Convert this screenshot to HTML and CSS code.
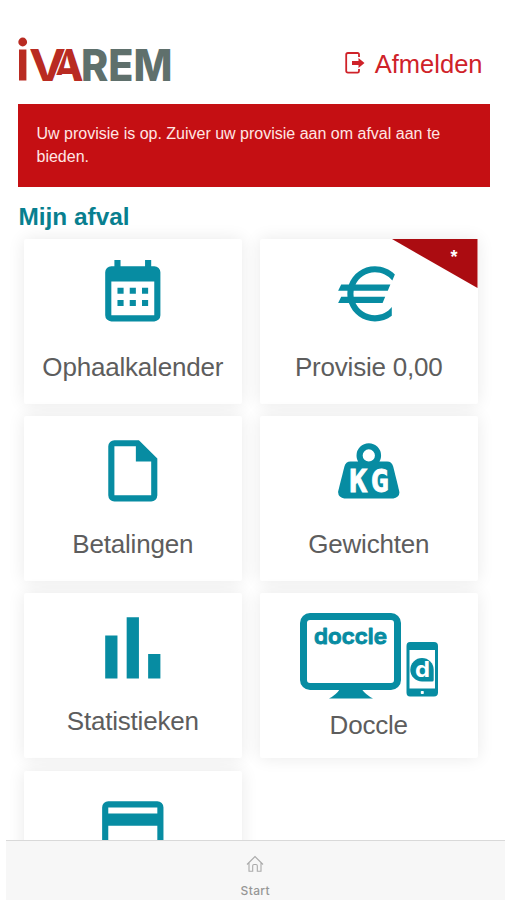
FILE: index.html
```html
<!DOCTYPE html>
<html lang="nl">
<head>
<meta charset="utf-8">
<title>Ivarem</title>
<link rel="stylesheet" href="styles.css">
</head>
<body>
<div class="app">
  <header class="header">
    <svg class="logo" viewBox="0 0 154 46" role="img" aria-label="Ivarem">
      <defs><clipPath id="a-clip"><path d="M46 8H70V46H53V38H38V33Z"/></clipPath></defs>
      <g class="logo-red">
        <circle cx="4.700" cy="5" r="4.400"/>
        <rect x="1" y="12.500" width="7.400" height="31"/>
        <g clip-path="url(#a-clip)"><text x="33" y="43.500" textLength="32.500" lengthAdjust="spacingAndGlyphs">A</text></g>
        <text class="logo-v" x="11" y="43.500" textLength="37" lengthAdjust="spacingAndGlyphs">V</text>
      </g>
      <text class="logo-grey" x="63" y="43.500" textLength="91.500" lengthAdjust="spacingAndGlyphs">REM</text>
    </svg>
    <a class="logout">
      <svg class="logout-icon" viewBox="0 0 20 22"><path class="logout-door" d="M14 5V2.500Q14 1 12.500 1H3Q1.200 1 1.200 2.800V18.800Q1.200 20.600 3 20.600H12.500Q14 20.600 14 19V17"/><path d="M7 9h6.500V6l6 5-6 5v-3H7z"/></svg>
      <span>Afmelden</span>
    </a>
  </header>
  <div class="alert">Uw provisie is op. Zuiver uw provisie aan om afval aan te bieden.</div>
  <h1 class="title">Mijn afval</h1>
  <main class="grid">
    <a class="card">
      <svg class="icon" viewBox="0 0 24 24"><path fill-rule="evenodd" d="M6 1H8V3H16V1H18V3H19A2 2 0 0 1 21 5V19A2 2 0 0 1 19 21H5A2 2 0 0 1 3 19V5A2 2 0 0 1 5 3H6ZM5 8V19H19V8Z"/><path d="M7 10h2v2H7zM11 10h2v2h-2zM15 10h2v2h-2zM7 14h2v2H7zM11 14h2v2h-2zM15 14h2v2h-2z"/></svg>
      <span class="label">Ophaalkalender</span>
    </a>
    <a class="card">
      <span class="ribbon"><b>*</b></span>
      <svg class="icon" viewBox="0 0 24 24"><path d="M7.070 11L7 12L7.070 13H17.350L16.500 15H7.670C8.800 17.360 11.210 19 14 19C16.230 19 18.220 17.960 19.500 16.330V19.120C18 20.300 16.070 21 14 21C10.080 21 6.750 18.500 5.500 15H2L3 13H5.050L5 12L5.050 11H2L3 9H5.500C6.750 5.500 10.080 3 14 3C16.500 3 18.800 4 20.500 5.670L19.670 7.660C18.310 6.050 16.270 5 14 5C11.210 5 8.800 6.640 7.670 9H19.040L18.190 11Z"/></svg>
      <span class="label">Provisie 0,00</span>
    </a>
    <a class="card">
      <svg class="icon" viewBox="0 0 24 24"><path fill-rule="evenodd" d="M13 9V4H6V20H18V9ZM6 2H14L20 8V20A2 2 0 0 1 18 22H6A2 2 0 0 1 4 20V4A2 2 0 0 1 6 2Z"/></svg>
      <span class="label">Betalingen</span>
    </a>
    <a class="card">
      <svg class="icon" viewBox="0 0 24 24"><path fill-rule="evenodd" d="M12 3A4 4 0 0 1 16 7C16 7.730 15.810 8.410 15.460 9H18C18.950 9 19.750 9.670 19.950 10.560C21.960 18.570 22 18.780 22 19A2 2 0 0 1 20 21H4A2 2 0 0 1 2 19C2 18.780 2.040 18.570 4.050 10.560C4.250 9.670 5.050 9 6 9H8.540C8.190 8.410 8 7.730 8 7A4 4 0 0 1 12 3ZM12 5A2 2 0 0 0 12 9A2 2 0 0 0 12 5Z"/><text class="kg" x="5.600" y="18.800" textLength="5.900" lengthAdjust="spacingAndGlyphs">K</text><text class="kg" x="12.600" y="18.800" textLength="5.900" lengthAdjust="spacingAndGlyphs">G</text></svg>
      <span class="label">Gewichten</span>
    </a>
    <a class="card">
      <svg class="icon" viewBox="0 0 24 24"><path d="M3 8H7V22H3ZM10 2H14V22H10ZM17 14H21V22H17Z"/></svg>
      <span class="label">Statistieken</span>
    </a>
    <a class="card">
      <svg class="devices" viewBox="0 0 138 86">
        <rect class="monitor" x="3.500" y="3.500" width="94" height="70" rx="6.500"/>
        <path d="M40 76H61.500Q66 82 73 85.500H29Q36 82 40 76Z"/>
        <text class="brand" x="14" y="30.500" textLength="73" lengthAdjust="spacingAndGlyphs">doccle</text>
        <path fill-rule="evenodd" d="M110 29H134Q138 29 138 33V79.500Q138 83.500 134 83.500H110Q106.500 83.500 106.500 79.500V33Q106.500 29 110 29ZM109.500 37V75.500H135V37Z"/>
        <rect class="hole" x="120.800" y="78" width="3" height="3" rx=".7"/>
        <path d="M122 45A11.700 11.700 0 0 1 133.700 56.700V66.900Q133.700 68.400 132.200 68.400H122A11.700 11.700 0 0 1 122 45Z"/>
        <text class="brand-d" x="115" y="64" textLength="15" lengthAdjust="spacingAndGlyphs">d</text>
      </svg>
      <span class="label">Doccle</span>
    </a>
    <a class="card">
      <svg class="icon" viewBox="0 0 24 24"><path fill-rule="evenodd" d="M20 8H4V6H20ZM20 18H4V12H20ZM20 4H4A2 2 0 0 0 2 6V18A2 2 0 0 0 4 20H20A2 2 0 0 0 22 18V6A2 2 0 0 0 20 4Z"/></svg>
    </a>
  </main>
  <nav class="tabbar">
    <svg class="home" viewBox="0 0 18 18"><path d="M1 9.500L9 1.500L17 9.500M3 8V16.300H6.700V10.800Q6.700 9.500 8 9.500H10Q11.300 9.500 11.300 10.800V16.300H15V8"/></svg>
    <span>Start</span>
  </nav>
</div>
</body>
</html>
```
FILE: styles.css
```css
* { box-sizing: border-box; }

body {
  margin: 0;
  background: #fff;
  font-family: "Liberation Sans", Arial, sans-serif;
}

.app {
  display: flex;
  flex-direction: column;
  height: 900px;
  padding: 37px 2.500px 0 6px;
  overflow: hidden;
}

.header {
  display: flex;
  flex: none;
  justify-content: space-between;
  height: 66.500px;
  padding: 0 22px 0 12px;
}

.logo {
  width: 154px;
  height: 46px;
  overflow: visible;
  font: 800 44px Inter, sans-serif;
}

.logo-red { fill: #b92b22; }
.logo-v { stroke: #fff; stroke-width: 2.400px; paint-order: stroke; font-weight: 700; }
.logo-grey { fill: #5f706c; }

.logout {
  display: flex;
  gap: 10px;
  height: 30px;
  margin-top: 12px;
  color: #cf2229;
  font-size: 25.500px;
  line-height: 30px;
}

.logout-icon {
  width: 20px;
  height: 22px;
  margin-top: 3px;
  fill: currentColor;
}

.logout-door { fill: none; stroke: currentColor; stroke-width: 1.800px; }

.alert {
  flex: none;
  height: 83px;
  margin: 0 15px 0 12px;
  padding: 18px 40px 0 18.500px;
  background: #c50f13;
  color: #ffe6e4;
  font-size: 16px;
  line-height: 23.500px;
}

.title {
  flex: none;
  height: 30px;
  margin: 15px 0 8px 12.500px;
  color: #087f8f;
  font-size: 24.400px;
  line-height: 30px;
}

.grid {
  display: grid;
  flex: 1;
  grid-template-columns: 217.500px 217.500px;
  grid-auto-rows: 164.900px;
  gap: 12.300px 18.500px;
  min-height: 0;
  margin-top: -.4px;
  padding: 0 18px;
}

.card {
  position: relative;
  display: flex;
  flex-direction: column;
  align-items: center;
  padding-top: 18px;
  border-radius: 2px;
  background: #fff;
  box-shadow: 0 0 17px rgba(0, 0, 0, .09);
}

.icon {
  width: 73.600px;
  height: 73.600px;
  margin-bottom: 21.200px;
  fill: #078ca2;
}

.label {
  color: #5d5d5d;
  font-size: 26px;
  line-height: 30px;
  letter-spacing: -.2px;
  white-space: nowrap;
}

.kg {
  fill: #fff;
  stroke: #fff;
  stroke-width: .3px;
  font: 700 10.600px "DejaVu Sans Mono", monospace;
}

.ribbon {
  position: absolute;
  top: 0;
  right: 0;
  width: 85.500px;
  height: 49px;
  padding: 7px 20px 0 0;
  background: #ab0c11;
  clip-path: polygon(0 0, 100% 0, 100% 100%);
  color: #fff;
  font-size: 18px;
  line-height: 22px;
  text-align: right;
}

.devices {
  width: 138px;
  height: 86px;
  margin: 1.500px 0 11px;
  fill: #078ca2;
}

.monitor { fill: none; stroke: #078ca2; stroke-width: 7px; }

.brand {
  font: 600 21.500px Inter, sans-serif;
  stroke: #078ca2;
  stroke-width: .9px;
  stroke-linejoin: round;
}

.brand-d { fill: #fff; font: 700 22px Inter, sans-serif; }
.hole { fill: #fff; }

.tabbar {
  position: relative;
  display: flex;
  flex: none;
  flex-direction: column;
  align-items: center;
  height: 60px;
  padding-top: 14px;
  border-top: 1px solid #d9d9d9;
  background: #f7f7f7;
  color: #969696;
  font: 500 12px/16px Inter, sans-serif;
  letter-spacing: .35px;
}

.home {
  width: 18px;
  height: 18px;
  margin-bottom: 10px;
  fill: none;
  stroke: #aaa;
  stroke-width: 1.100px;
}
```
